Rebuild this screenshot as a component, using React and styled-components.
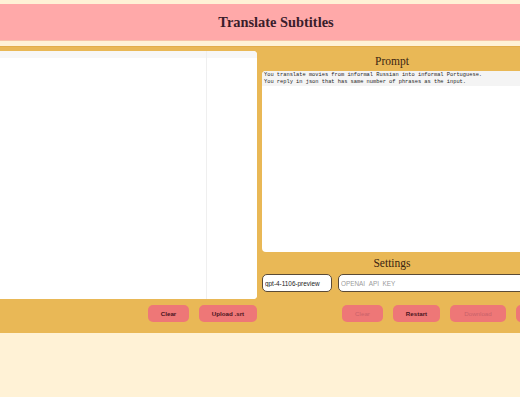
import React, { useState } from 'react';
import styled, { createGlobalStyle } from 'styled-components';

const GlobalStyle = createGlobalStyle`
  html, body {
    margin: 0;
    padding: 0;
    background: #fff2d6;
    overflow: hidden;
  }
  body {
    font-family: "Liberation Sans", Arial, sans-serif;
  }
`;

const Page = styled.div`
  width: 100%;
  min-height: 397px;
  padding-top: 4px;
  background: #fff2d6;
`;

const Header = styled.header`
  height: 36px;
  background: #ffa9a9;
  border-bottom: 1px solid #f7c2a8;
  display: flex;
  align-items: center;
  justify-content: center;
  h1 {
    margin: 0 0 0 32px;
    font-family: "Liberation Serif", "Times New Roman", serif;
    font-size: 14.4px;
    font-weight: bold;
    color: #3a1d2b;
  }
`;

const Main = styled.main`
  margin-top: 5px;
  height: 287px;
  background: #e9b856;
  border-top: 1px solid #e2ad4a;
  display: grid;
  grid-template-columns: 257px 280px;
  column-gap: 5px;
  padding-top: 4px;
  box-sizing: border-box;
`;

const Column = styled.section`
  display: flex;
  flex-direction: column;
  min-width: 0;
`;

const TablePanel = styled.div`
  height: 248px;
  background: #fff;
  border-radius: 0 4px 4px 0;
  overflow: hidden;
  display: grid;
  grid-template-columns: 207px 1fr;
  grid-template-rows: 7px 1fr;
`;

const Cell = styled.div`
  background: ${(p) => (p.$head ? '#f7f7f7' : '#fff')};
  border-right: ${(p) => (p.$first ? '1px solid #efefef' : 'none')};
`;

const Title = styled.h2`
  margin: 0;
  height: ${(p) => p.$h}px;
  line-height: ${(p) => p.$h}px;
  text-align: center;
  font-family: "Liberation Serif", "Times New Roman", serif;
  font-weight: normal;
  font-size: 11.5px;
  color: #3b2512;
  padding-right: 20px;
`;

const PromptBox = styled.div`
  height: 181px;
  background: #fff;
  border-radius: 4px;
  overflow: hidden;
  font-family: "Liberation Mono", "Courier New", monospace;
  font-size: 5.35px;
  line-height: 6.6px;
  color: #1e1e1e;
`;

const PromptText = styled.div`
  background: #f4f4f4;
  padding: 1px 2px 1px;
  white-space: pre;
`;

const SettingsRow = styled.div`
  display: flex;
  gap: 6px;
`;

const Field = styled.input`
  box-sizing: border-box;
  width: ${(p) => p.$w}px;
  height: 18px;
  border: 1px solid #5a4a36;
  border-radius: 5px;
  background: #fff;
  padding: 0 2px;
  font-family: "Liberation Sans", Arial, sans-serif;
  font-size: 6.4px;
  color: #222;
  outline: none;
  &::placeholder {
    color: #9a9a9a;
  }
`;

const ButtonRow = styled.div`
  display: flex;
  gap: 10px;
  justify-content: ${(p) => (p.$end ? 'flex-end' : 'flex-start')};
  margin-top: ${(p) => p.$top}px;
  padding-left: ${(p) => p.$left || 0}px;
`;

const Button = styled.button`
  box-sizing: border-box;
  width: ${(p) => p.$w}px;
  height: 17px;
  flex: none;
  border: none;
  border-radius: 5px;
  background: #ee7777;
  font-family: "Liberation Sans", Arial, sans-serif;
  font-size: 6.2px;
  font-weight: bold;
  color: #4a1420;
  padding: 0;
  &:disabled {
    color: #c9626a;
    font-weight: normal;
  }
`;

export default function App() {
  const [model, setModel] = useState('gpt-4-1106-preview');
  const [key, setKey] = useState('');
  const prompt =
    'You translate movies from informal Russian into informal Portuguese.\nYou reply in json that has same number of phrases as the input.';

  return (
    <Page>
      <GlobalStyle />
      <Header>
        <h1>Translate Subtitles</h1>
      </Header>
      <Main>
        <Column>
          <TablePanel>
            <Cell $head $first />
            <Cell $head />
            <Cell $first />
            <Cell />
          </TablePanel>
          <ButtonRow $end $top={6}>
            <Button $w={41}>Clear</Button>
            <Button $w={58}>Upload .srt</Button>
          </ButtonRow>
        </Column>
        <Column>
          <Title $h={20}>Prompt</Title>
          <PromptBox>
            <PromptText>{prompt}</PromptText>
          </PromptBox>
          <Title $h={22}>Settings</Title>
          <SettingsRow>
            <Field $w={70} value={model} onChange={(e) => setModel(e.target.value)} />
            <Field $w={200} placeholder="OPENAI_API_KEY" value={key} onChange={(e) => setKey(e.target.value)} />
          </SettingsRow>
          <ButtonRow $top={13} $left={80}>
            <Button $w={41} disabled>Clear</Button>
            <Button $w={47}>Restart</Button>
            <Button $w={56} disabled>Download</Button>
            <Button $w={56}>Translate</Button>
          </ButtonRow>
        </Column>
      </Main>
    </Page>
  );
}
